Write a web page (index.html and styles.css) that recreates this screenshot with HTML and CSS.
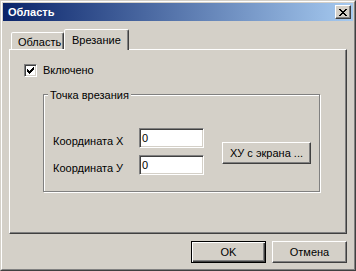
FILE: index.html
```html
<!DOCTYPE html>
<html lang="ru">
<head>
<meta charset="utf-8">
<title>Область</title>
<link rel="stylesheet" href="styles.css">
</head>
<body>
<div class="window">
  <div class="frame">
    <div class="titlebar">
      <span class="title">Область</span>
      <div class="close">
        <svg width="8" height="7" viewBox="0 0 8 7" shape-rendering="crispEdges"><path d="M0 0h2v1H0zM6 0h2v1H6zM1 1h2v1H1zM5 1h2v1H5zM2 2h4v1H2zM3 3h2v1H3zM2 4h4v1H2zM1 5h2v1H1zM5 5h2v1H5zM0 6h2v1H0zM6 6h2v1H6z" fill="#000"/></svg>
      </div>
    </div>
    <div class="body">
      <div class="tabs">
        <div class="tab">Область</div>
        <div class="tab active">Врезание</div>
      </div>
      <div class="panel">
        <div class="check">
          <span class="box"><svg width="7" height="7" viewBox="0 0 7 7" shape-rendering="crispEdges"><path d="M0 2h1v3H0zM1 3h1v3H1zM2 4h1v3H2zM3 3h1v3H3zM4 2h1v3H4zM5 1h1v3H5zM6 0h1v3H6z" fill="#000"/></svg></span>
          <span>Включено</span>
        </div>
        <div class="group">
          <span class="legend">Точка врезания</span>
          <div class="group-body">
            <div class="fields">
              <div class="row"><span class="lbl">Координата Х</span><span class="input">0</span></div>
              <div class="row"><span class="lbl">Координата У</span><span class="input">0</span></div>
            </div>
            <div class="btn xy">ХУ с экрана ...</div>
          </div>
        </div>
      </div>
      <div class="actions">
        <div class="btn default">OK</div>
        <div class="btn">Отмена</div>
      </div>
    </div>
  </div>
</div>
</body>
</html>
```
FILE: styles.css
```css
* { box-sizing: border-box; margin: 0; padding: 0; }
body {
  margin: 0;
  background: #d4d0c8;
  font: 11px/13px "Liberation Sans", Arial, sans-serif;
  color: #000;
}
.window {
  width: 356px;
  height: 271px;
  border: 1px solid;
  border-color: #d4d0c8 #404040 #404040 #d4d0c8;
}
.frame {
  height: 100%;
  border: 1px solid;
  border-color: #fff #808080 #808080 #fff;
  padding: 1px;
  display: flex;
  flex-direction: column;
}
.titlebar {
  height: 18px;
  flex: none;
  background: linear-gradient(to right, #0a246a, #a6caf0);
  display: flex;
  align-items: center;
  justify-content: space-between;
  padding: 0 2px 0 5px;
  color: #fff;
  font-weight: bold;
}
.close {
  width: 16px;
  height: 14px;
  background: #d4d0c8;
  border: 1px solid;
  border-color: #fff #404040 #404040 #fff;
  box-shadow: inset -1px -1px #808080;
  display: flex;
  align-items: center;
  justify-content: center;
  padding-right: 1px;
}
.close svg { display: block; }
.body {
  flex: 1;
  padding: 8px 6px 0 6px;
  display: flex;
  flex-direction: column;
}
.tabs {
  height: 20px;
  display: flex;
  align-items: flex-end;
  position: relative;
  z-index: 1;
}
.tab {
  height: 17px;
  width: 53px;
  margin-left: 2px;
  padding: 3px 0 0 6px;
  background: #d4d0c8;
  border: 1px solid;
  border-bottom: none;
  border-color: #fff #404040 transparent #fff;
  box-shadow: inset -1px 0 #808080;
  border-radius: 2px 2px 0 0;
}
.tab.active {
  height: 21px;
  width: 65px;
  margin-left: 0;
  margin-bottom: -1px;
  padding: 4px 0 0 7px;
}
.panel {
  height: 185px;
  flex: none;
  border: 1px solid;
  border-color: #fff #404040 #404040 #fff;
  box-shadow: inset -1px -1px #808080;
  padding: 14px 0 0 14px;
}
.check {
  display: flex;
  align-items: center;
  gap: 6px;
  height: 13px;
}
.box {
  width: 13px;
  height: 13px;
  background: #fff;
  border: 1px solid;
  border-color: #808080 #fff #fff #808080;
  box-shadow: inset 1px 1px #404040, inset -1px -1px #d4d0c8;
  padding: 2px 0 0 2px;
}
.box svg { display: block; }
.group {
  width: 277px;
  height: 98px;
  margin: 17px 0 0 19px;
  border: 1px solid #808080;
  box-shadow: inset 1px 1px #fff, 1px 1px #fff;
  display: flex;
  flex-direction: column;
}
.legend {
  align-self: flex-start;
  margin: -7px 0 0 4px;
  padding: 0 2px;
  background: #d4d0c8;
  height: 14px;
  line-height: 14px;
}
.group-body {
  display: flex;
  align-items: center;
  margin-top: 26px;
  padding-left: 9px;
}
.fields {
  display: flex;
  flex-direction: column;
  gap: 7px;
}
.row {
  display: flex;
  align-items: center;
  height: 20px;
}
.lbl {
  width: 86px;
  height: 20px;
  padding-top: 7px;
}
.input {
  width: 65px;
  height: 20px;
  background: #fff;
  border: 1px solid;
  border-color: #808080 #fff #fff #808080;
  box-shadow: inset 1px 1px #404040, inset -1px -1px #d4d0c8;
  padding: 3px 0 0 2px;
}
.btn {
  width: 75px;
  height: 22px;
  border: 1px solid;
  border-color: #fff #404040 #404040 #fff;
  box-shadow: inset -1px -1px #808080;
  display: flex;
  align-items: center;
  justify-content: center;
}
.xy {
  width: 89px;
  margin: 3px 0 0 18px;
}
.actions {
  display: flex;
  justify-content: flex-end;
  gap: 6px;
  margin-top: 7px;
}
.btn.default {
  border: 1px solid #000;
  box-shadow: inset 1px 1px #fff, inset -1px -1px #404040, inset -2px -2px #808080;
}
```
